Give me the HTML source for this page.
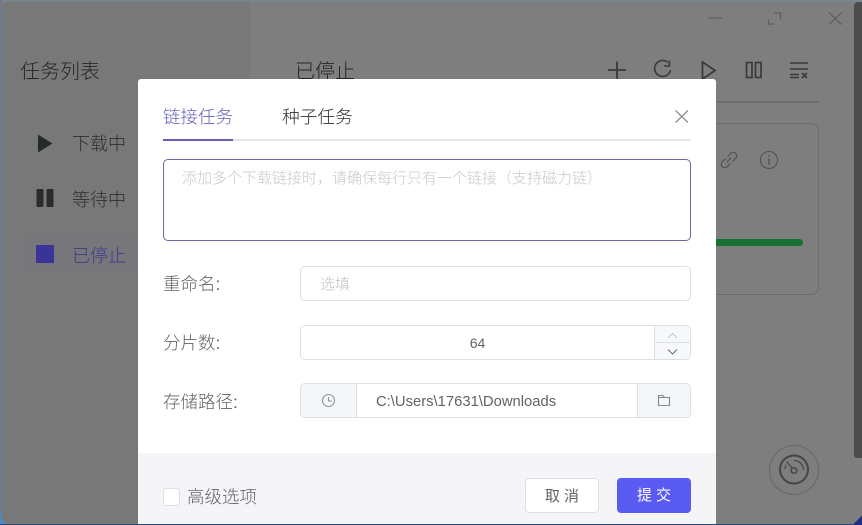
<!DOCTYPE html>
<html lang="zh-CN"><head><meta charset="utf-8">
<style>
*{box-sizing:border-box}
html,body{margin:0;padding:0;width:862px;height:525px;overflow:hidden;background:#7f7f80}
body{font-family:"Liberation Sans","Noto Sans CJK SC",sans-serif;position:relative}
.a{position:absolute;white-space:nowrap}
svg{position:absolute;overflow:visible;fill:none}
.lbl{font-size:17.500px;line-height:24px;color:#606266;font-weight:300}
.box{position:absolute;border:1px solid #dcdfe6;border-radius:5px;background:#fff}
</style></head><body>
<!-- desktop edges -->
<div class="a" style="left:0;top:0;width:862px;height:2px;background:#76868c"></div>
<div class="a" style="left:0;top:0;width:2px;height:525px;background:#6d7a8a"></div>
<div class="a" style="left:0;top:524px;width:862px;height:1px;background:#2a4778"></div>
<div class="a" style="left:0;top:512px;width:5px;height:12px;background:linear-gradient(45deg,#3f8fd8,#6f7f90)"></div>
<div class="a" style="left:854px;top:514px;width:8px;height:11px;background:linear-gradient(135deg,#7f7f80 45%,#1c2f80 55%)"></div>
<!-- window -->
<div class="a" style="left:2px;top:2px;width:248px;height:522px;background:#787878;border-radius:6px 0 0 6px"></div>
<div class="a" style="left:250px;top:2px;width:604px;height:522px;background:#7f7e7f"></div>
<div class="a" style="left:854px;top:2px;width:8px;height:456px;background:#4c4b4e;border-radius:4px 0 0 3px"></div>
<!-- sidebar -->
<div class="a" style="left:20px;top:59px;font-size:20px;line-height:26px;color:#262626;font-weight:300">任务列表</div>
<svg style="left:0;top:0" width="140" height="280"><path d="M38 134.500L52.500 143.500L38 152.500Z" fill="#252a2a"/><rect x="36.500" y="189" width="7" height="18" rx="1" fill="#2b2b2b"/><rect x="46.500" y="189" width="7" height="18" rx="1" fill="#2b2b2b"/></svg>
<div class="a" style="left:72px;top:132px;font-size:18px;line-height:24px;color:#2f2f2f;font-weight:300">下载中</div>
<div class="a" style="left:72px;top:188px;font-size:18px;line-height:24px;color:#2f2f2f;font-weight:300">等待中</div>
<div class="a" style="left:21px;top:235px;width:117px;height:40px;background:#77767b;border-radius:6px"></div>
<div class="a" style="left:36px;top:245px;width:18px;height:18px;background:#3c3398"></div>
<div class="a" style="left:72px;top:244px;font-size:18px;line-height:24px;color:#3c3a8e;font-weight:300">已停止</div>
<!-- main -->
<div class="a" style="left:295px;top:59px;font-size:20px;line-height:26px;color:#262626;font-weight:300">已停止</div>
<svg style="left:0;top:0" width="862" height="525" stroke="#3a3a3b" stroke-width="1.600">
<path d="M608 70H626M617 61.500V79" stroke-width="1.800"/>
<path d="M668 62.500A8 8 0 1 0 670.500 70M669.500 60.500V66H664" stroke-width="1.600"/>
<path d="M702.500 62L715 70.500L702.500 79Z" stroke-width="1.800"/>
<rect x="746.500" y="62.500" width="5.500" height="15" stroke-width="1.700"/><rect x="755.500" y="62.500" width="5.500" height="15" stroke-width="1.700"/>
<path d="M790 63H808M790 69H808M790 74.500H799M790 77.500H799" stroke-width="1.500"/>
<path d="M802 73L807 78M807 73L802 78" stroke-width="1.700"/>
<path d="M708 18H722" stroke="#5e5e5f" stroke-width="1.200"/>
<path d="M768.500 19V24H774M774 13H780.500V19.500" stroke="#5e5e5f" stroke-width="1.300"/>
<path d="M829 12.500L841.500 24.500M841.500 12.500L829 24.500" stroke="#5a5a5b" stroke-width="1.200"/>
<g transform="translate(729 160) rotate(-45)" stroke="#4f4f50" stroke-width="1.100"><path d="M-1.500 -3.500H-6A3.500 3.500 0 0 0 -6 3.500H-1.500M1.500 -3.500H6A3.500 3.500 0 0 1 6 3.500H1.500M-3 0H3"/></g>
<circle cx="769" cy="160" r="8.500" stroke="#4f4f50" stroke-width="1.100"/>
<path d="M769 158.500V165M769 155V156.500" stroke="#4f4f50" stroke-width="1.300"/>
<path d="M716 102H818.500" stroke="#6f6e70" stroke-width="2"/>
<rect x="700" y="123.500" width="118.500" height="171" rx="7" stroke="#6c6c6e" stroke-width="1"/>
<path d="M712 242.500H799.500" stroke="#157233" stroke-width="7" stroke-linecap="round"/>
<circle cx="794" cy="470" r="24.500" stroke="#666667" stroke-width="1"/>
<circle cx="794" cy="469.500" r="14" stroke="#454546" stroke-width="2"/>
<circle cx="794" cy="470.500" r="2.800" stroke="#454546" stroke-width="1.400"/>
<path d="M792.500 468.500L786.500 461.500M794 460.500A9.500 9.500 0 0 1 803.500 470M785 469A9.500 9.500 0 0 1 786 465" stroke="#454546" stroke-width="1.200"/>
</svg>
<!-- dialog -->
<div class="a" style="left:138px;top:79px;width:578px;height:445px;background:#fff;border-radius:3px 3px 0 0"></div>
<div class="a" style="left:138px;top:453px;width:578px;height:71px;background:#f5f5f8"></div>
<div class="a" style="left:163px;top:105px;font-size:17.500px;line-height:24px;color:#645fb8;font-weight:300">链接任务</div>
<div class="a" style="left:282px;top:105px;font-size:17.700px;line-height:24px;color:#303133;font-weight:300">种子任务</div>
<div class="a" style="left:163px;top:139px;width:528px;height:2px;background:#e6e7eb"></div>
<div class="a" style="left:163px;top:139px;width:70px;height:2px;background:#6a5fae"></div>
<svg style="left:0;top:0" width="862" height="525"><path d="M675.500 110.500L688 122.500M688 110.500L675.500 122.500" stroke="#8e8f93" stroke-width="1.300"/></svg>
<div class="box" style="left:163px;top:159px;width:528px;height:82px;border-color:#6f66a8"></div>
<div class="a" style="left:182px;top:169px;font-size:15px;line-height:20px;color:#c6c8cc;font-weight:300">添加多个下载链接时，请确保每行只有一个链接（支持磁力链）</div>
<div class="a lbl" style="left:163px;top:272px">重命名:</div>
<div class="box" style="left:300px;top:266px;width:391px;height:35px"></div>
<div class="a" style="left:320px;top:275px;font-size:15px;line-height:20px;color:#bfc1c6;font-weight:300">选填</div>
<div class="a lbl" style="left:163px;top:331px">分片数:</div>
<div class="box" style="left:300px;top:325px;width:391px;height:35px"></div>
<div class="a" style="left:300px;top:333px;width:355px;text-align:center;font-size:14px;line-height:20px;color:#606266">64</div>
<div class="a" style="left:654px;top:326px;width:36px;height:33px;background:#f7f8fa;border-left:1px solid #dcdfe6;border-radius:0 4px 4px 0"></div>
<div class="a" style="left:655px;top:342px;width:35px;height:1px;background:#dcdfe6"></div>
<svg style="left:0;top:0" width="862" height="525"><path d="M668 338L672.500 333.500L677 338" stroke="#c4c6cb"/><path d="M668 349.500L672.500 354L677 349.500" stroke="#6c6e74"/></svg>
<div class="a lbl" style="left:163px;top:390px">存储路径:</div>
<div class="box" style="left:300px;top:383px;width:391px;height:35px"></div>
<div class="a" style="left:301px;top:384px;width:56px;height:33px;background:#f5f6f9;border-right:1px solid #dcdfe6;border-radius:4px 0 0 4px"></div>
<div class="a" style="left:637px;top:384px;width:53px;height:33px;background:#f5f6f9;border-left:1px solid #dcdfe6;border-radius:0 4px 4px 0"></div>
<div class="a" style="left:376px;top:392px;font-size:14.800px;line-height:20px;color:#606266">C:\Users\17631\Downloads</div>
<svg style="left:0;top:0" width="862" height="525"><circle cx="328.500" cy="400.500" r="6" stroke="#8d9097" stroke-width="1.100"/><path d="M328.500 397V401H332" stroke="#8d9097"/><path d="M658.500 395.500H663L664.500 397.500H669.500V405.500H658.500ZM658.500 397.500H664.500" stroke="#84878e" stroke-width="1.100"/></svg>
<div class="a" style="left:163px;top:488px;width:17px;height:18px;background:#fff;border:1px solid #dcdfe6;border-radius:3px"></div>
<div class="a" style="left:187px;top:485px;font-size:17.500px;line-height:24px;color:#606266;font-weight:300">高级选项</div>
<div class="a" style="left:525px;top:478px;width:74px;height:35px;background:#fff;border:1px solid #dcdfe6;border-radius:4px;text-align:center;font-size:15px;line-height:35px;color:#606266;letter-spacing:4px;text-indent:4px">取消</div>
<div class="a" style="left:617px;top:478px;width:74px;height:35px;background:#5a5bf2;border-radius:4px;text-align:center;font-size:15px;line-height:36px;color:#fff;letter-spacing:4px;text-indent:4px">提交</div>
</body></html>
